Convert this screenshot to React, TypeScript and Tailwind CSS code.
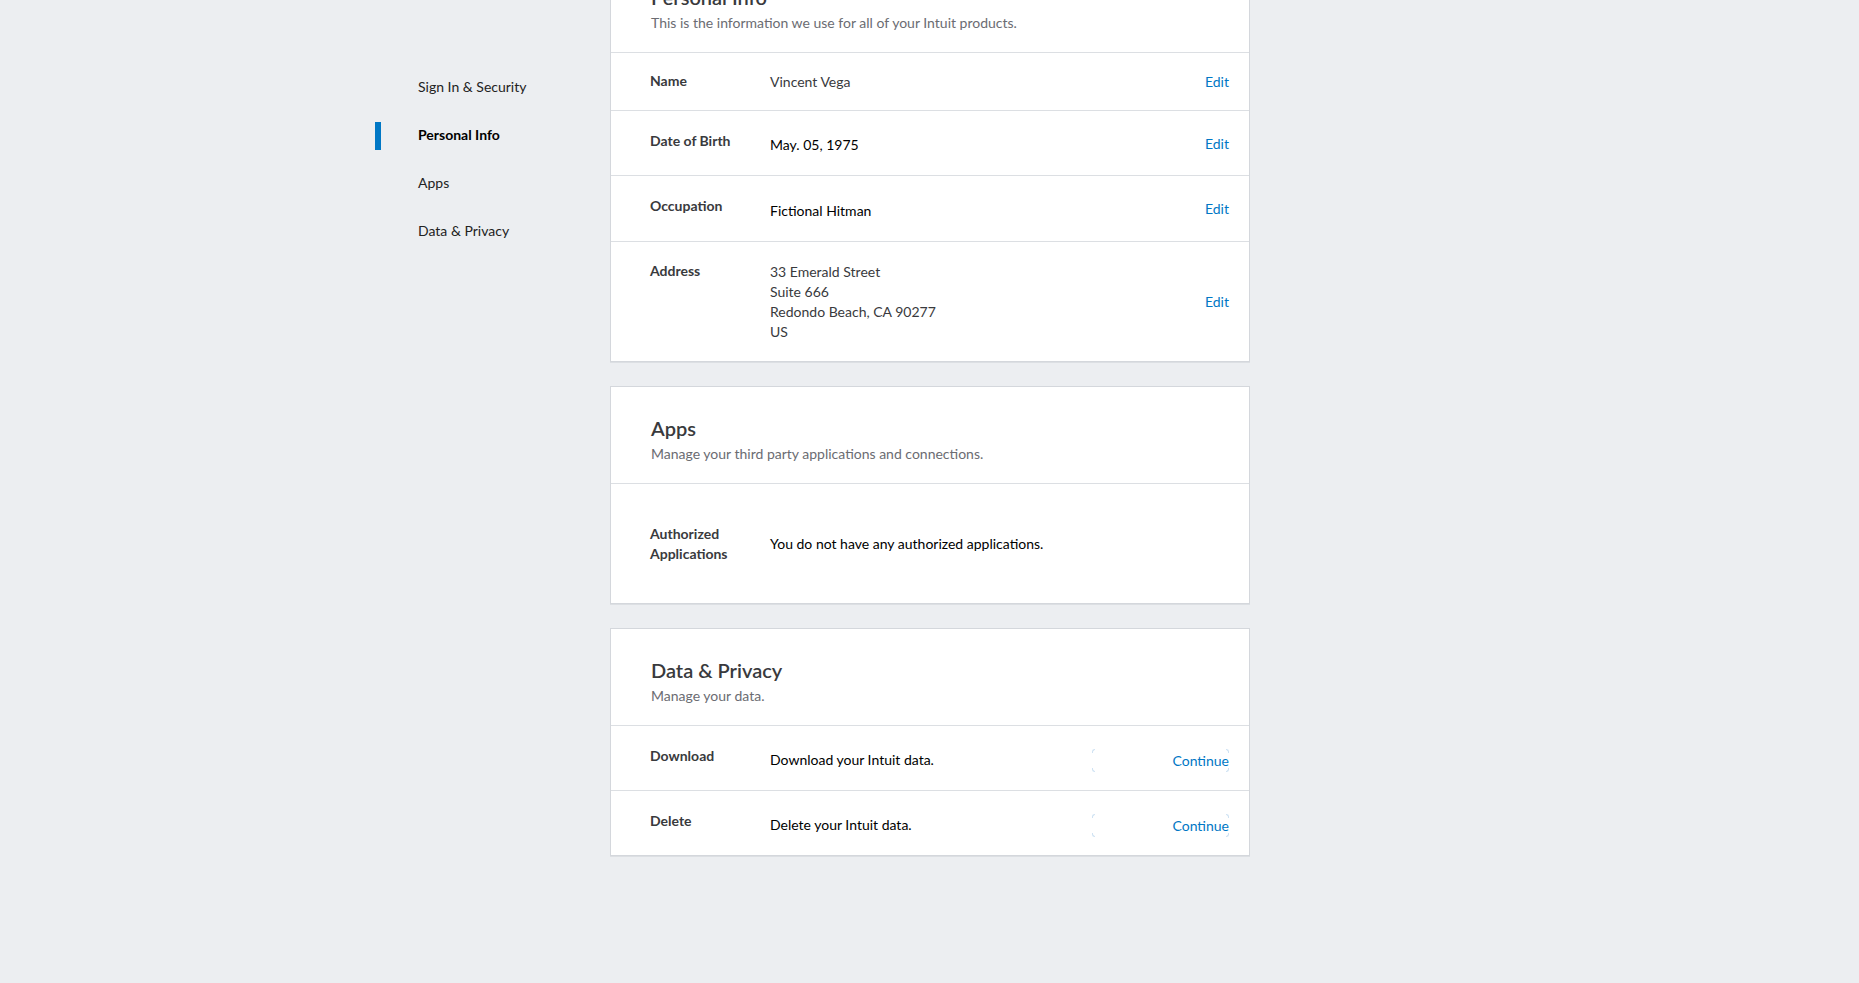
import React from 'react';

// Профиль аккаунта: боковое меню и карточки разделов
interface InfoRow {
  label: string;
  value: React.ReactNode;
  height: string;
  labelTop: string;
  dark?: boolean;
}

const navItems = ['Sign In & Security', 'Personal Info', 'Apps', 'Data & Privacy'];

const personalRows: InfoRow[] = [
  { label: 'Name', value: 'Vincent Vega', height: 'h-[58px]', labelTop: 'mt-[18px]' },
  { label: 'Date of Birth', value: 'May. 05, 1975', height: 'h-[65px]', labelTop: 'mt-[20px]', dark: true },
  { label: 'Occupation', value: 'Fictional Hitman', height: 'h-[66px]', labelTop: 'mt-[20px]', dark: true },
  {
    label: 'Address',
    value: (
      <>
        <div>33 Emerald Street</div>
        <div>Suite 666</div>
        <div>Redondo Beach, CA 90277</div>
        <div>US</div>
      </>
    ),
    height: 'h-[120px]',
    labelTop: 'mt-[19px]',
  },
];

function CardHeader({ title, subtitle }: { title: string; subtitle: string }) {
  return (
    <div className="px-[40px] pt-[27px] pb-[19px]">
      <h2 className="text-[20px] leading-[28px] font-semibold text-[#393a3d]">{title}</h2>
      <p className="mt-[2px] text-[14px] leading-[20px] text-[#6b6c72]">{subtitle}</p>
    </div>
  );
}

function ContinueButton() {
  // светлые уголки вокруг кнопки — след фокусной рамки
  return (
    <button className="relative w-[137px] h-[23px] flex items-center justify-end text-[14px] text-[#0077c5]">
      <span className="absolute left-0 top-0 w-[3px] h-[4px] border-l border-t border-[#cfe2f3] rounded-tl-[3px]" />
      <span className="absolute right-0 top-0 w-[3px] h-[4px] border-r border-t border-[#cfe2f3] rounded-tr-[3px]" />
      <span className="absolute left-0 bottom-0 w-[3px] h-[4px] border-l border-b border-[#cfe2f3] rounded-bl-[3px]" />
      <span className="absolute right-0 bottom-0 w-[3px] h-[4px] border-r border-b border-[#cfe2f3] rounded-br-[3px]" />
      Continue
    </button>
  );
}

export default function App() {
  const active = 'Personal Info';

  return (
    <div
      className="min-h-screen h-[983px] overflow-hidden bg-[#eceef1] text-[#393a3d]"
      style={{ fontFamily: 'Lato, "Noto Sans", sans-serif' }}
    >
      <div className="flex justify-center">
        {/* Боковое меню */}
        <nav className="w-[235px] shrink-0 pt-[62px]">
          {navItems.map((item) => (
            <div key={item} className="h-[48px] flex items-center">
              <div className={`w-[6px] h-[28px] mt-[4px] ${item === active ? 'bg-[#0077c5]' : 'bg-transparent'}`} />
              <span
                className={`ml-[37px] text-[14px] ${
                  item === active ? 'font-bold text-black' : 'text-[#222]'
                }`}
              >
                {item}
              </span>
            </div>
          ))}
        </nav>

        {/* Карточки */}
        <main className="w-[640px] shrink-0 -mt-[45px] flex flex-col gap-[24px]">
          <section className="bg-white border border-[#d4d7dc] shadow-[0_1px_0_#dcdfe3]">
            <CardHeader title="Personal Info" subtitle="This is the information we use for all of your Intuit products." />
            {personalRows.map((row) => (
              <div
                key={row.label}
                className={`${row.height} flex items-center border-t border-[#dcdfe3] pl-[39px] pr-[20px]`}
              >
                <div className={`w-[120px] shrink-0 self-start ${row.labelTop} text-[14px] leading-[20px] font-bold text-[#393a3d]`}>
                  {row.label}
                </div>
                <div
                  className={`flex-1 text-[14px] leading-[20px] ${
                    row.dark ? 'text-black mt-[4px]' : 'text-[#393a3d]'
                  }`}
                >
                  {row.value}
                </div>
                <button className="text-[14px] text-[#0077c5]">Edit</button>
              </div>
            ))}
          </section>

          <section className="bg-white border border-[#d4d7dc] shadow-[0_1px_0_#dcdfe3]">
            <CardHeader title="Apps" subtitle="Manage your third party applications and connections." />
            <div className="h-[120px] flex items-center border-t border-[#dcdfe3] pl-[39px] pr-[20px]">
              <div className="w-[120px] shrink-0 text-[14px] leading-[20px] font-bold text-[#393a3d]">
                Authorized
                <br />
                Applications
              </div>
              <div className="flex-1 text-[14px] leading-[20px] text-black">
                You do not have any authorized applications.
              </div>
            </div>
          </section>

          <section className="bg-white border border-[#d4d7dc] shadow-[0_1px_0_#dcdfe3]">
            <CardHeader title="Data & Privacy" subtitle="Manage your data." />
            {[
              { label: 'Download', text: 'Download your Intuit data.' },
              { label: 'Delete', text: 'Delete your Intuit data.' },
            ].map((row) => (
              <div
                key={row.label}
                className="h-[65px] flex items-center border-t border-[#dcdfe3] pl-[39px] pr-[20px]"
              >
                <div className="w-[120px] shrink-0 self-start mt-[20px] text-[14px] leading-[20px] font-bold text-[#393a3d]">
                  {row.label}
                </div>
                <div className="flex-1 mt-[4px] text-[14px] leading-[20px] text-black">{row.text}</div>
                <div className="mt-[4px]">
                  <ContinueButton />
                </div>
              </div>
            ))}
          </section>
        </main>

        <div className="w-[234px] shrink-0" />
      </div>
    </div>
  );
}
